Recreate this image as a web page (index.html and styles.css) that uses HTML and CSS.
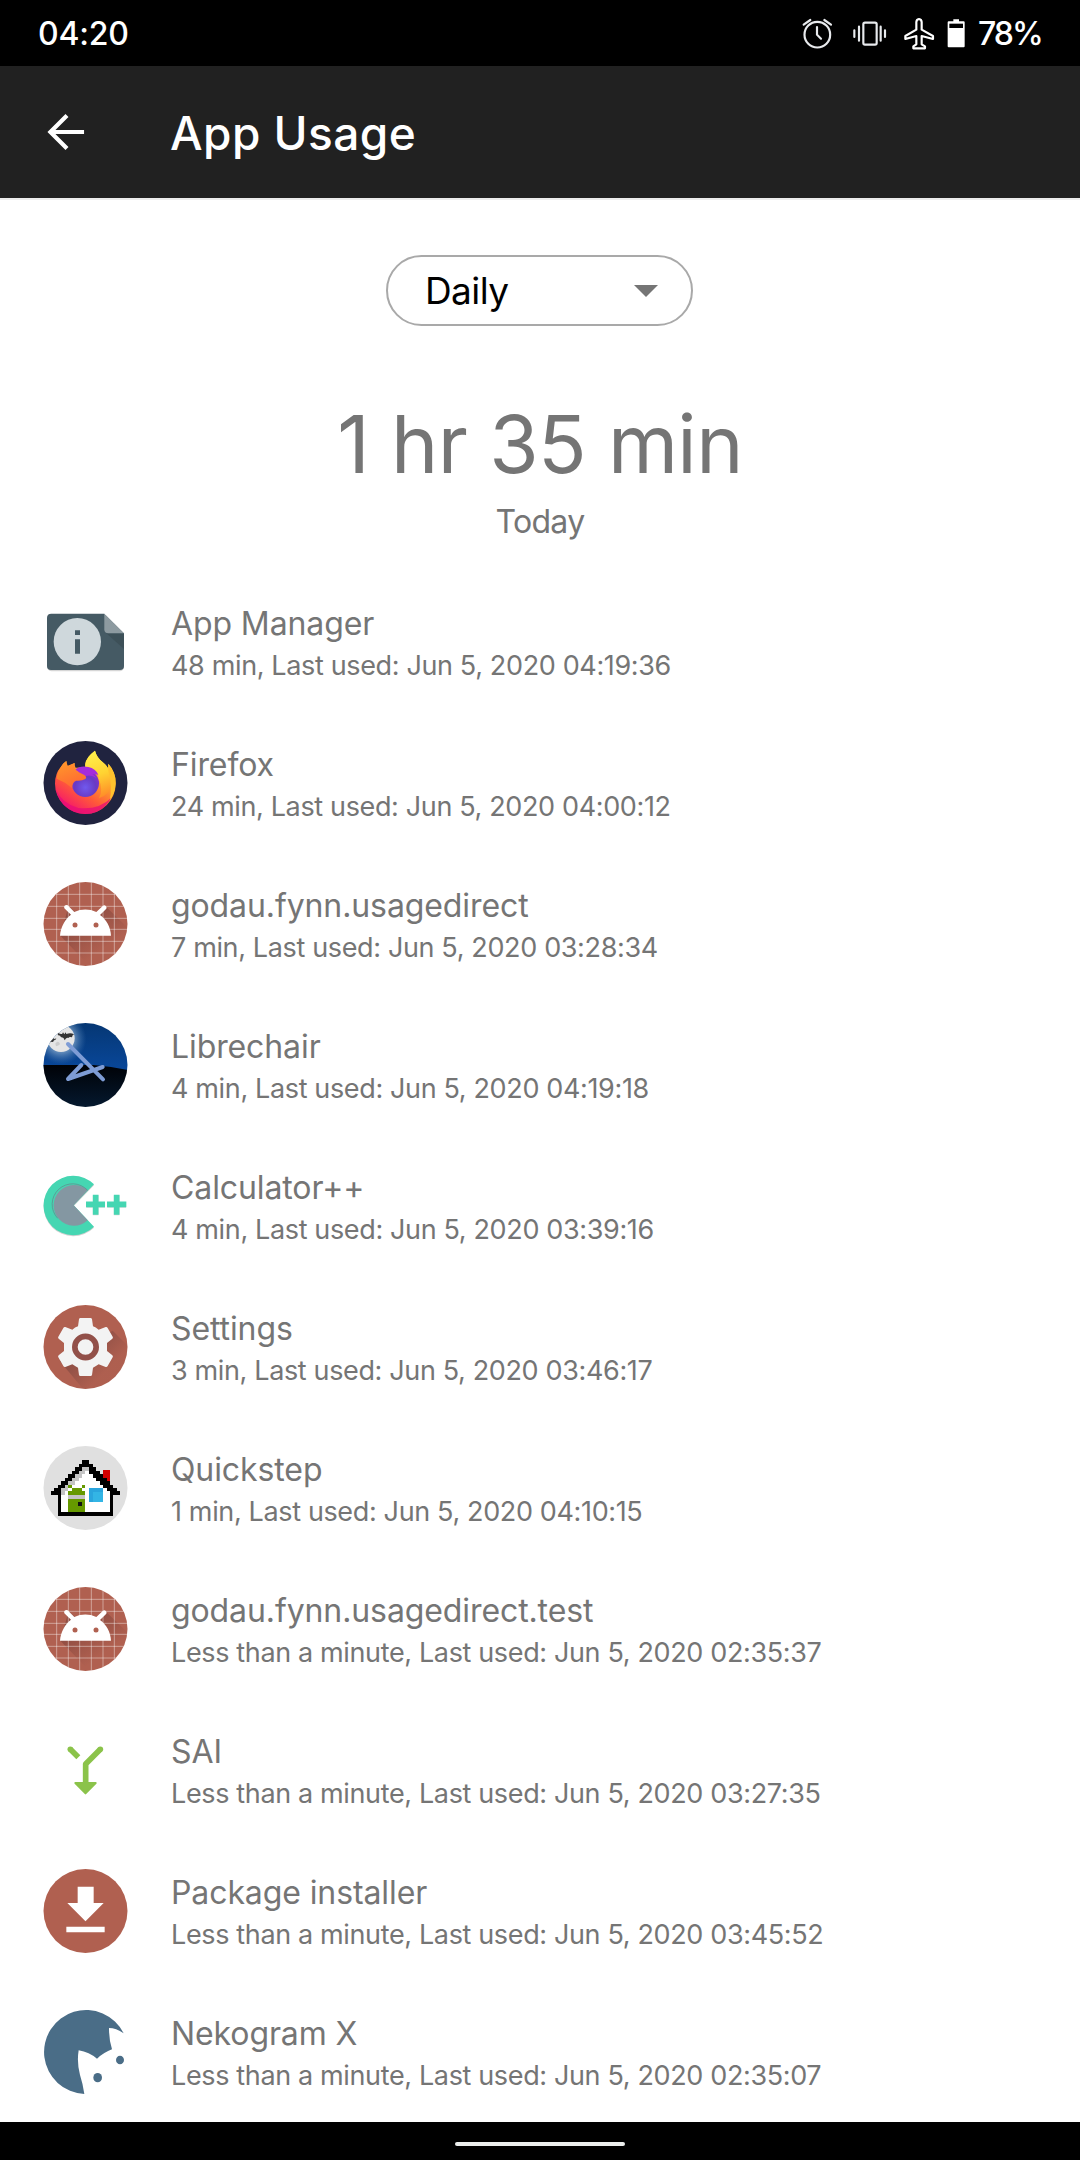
FILE: index.html
```html
<!DOCTYPE html>
<html lang="en">
<head>
<meta charset="utf-8">
<title>App Usage</title>
<link rel="stylesheet" href="styles.css">
</head>
<body>
<svg class="defs" aria-hidden="true">
  <defs>
    <clipPath id="disc"><circle cx="166.500" cy="162" r="126"/></clipPath>
    <linearGradient id="botShade" gradientUnits="userSpaceOnUse" x1="150" y1="150" x2="215" y2="240"><stop offset="0" stop-color="#703a34" stop-opacity=".5"/><stop offset="1" stop-color="#703a34" stop-opacity="0"/></linearGradient>
    <symbol id="android" viewBox="30 27 270 270">
      <g clip-path="url(#disc)">
        <rect x="30" y="27" width="270" height="270" fill="#b06050"/>
        <path d="M91 197L116 108L150 140L205 135L228 110L300 180V300H190Z" fill="url(#botShade)"/>
        <path d="M80 30V300M115 30V300M149 30V300M184 30V300M219 30V300M253 30V300M30 73H300M30 109H300M30 145H300M30 178H300M30 214H300M30 249H300" stroke="#fff" stroke-opacity=".5" stroke-width="2.500"/>
      </g>
      <path d="M90 197C92 171 105 147 123 134L103 115A7 7 0 0 1 113 106L133 126C154 116 178 116 199 126L219 107A7 7 0 0 1 229 116L210 135C229 149 242 171 243 197Z" fill="#fff"/>
      <circle cx="135" cy="165" r="7.500" fill="#b06050"/><circle cx="198" cy="165" r="7.500" fill="#b06050"/>
    </symbol>
  </defs>
</svg>
<div class="screen">
  <div class="status">
    <span class="clock">04:20</span>
    <div class="status-icons">
      <svg class="alarm" viewBox="122 50 96 99" fill="none" stroke="#e8eaed" stroke-width="6.500" stroke-linecap="round"><circle cx="171" cy="103" r="38.500"/><path d="M170 80V103L182 115M130 73L150 59M212 73L192 59"/></svg>
      <svg class="vibrate" viewBox="275 50 105 99" fill="none" stroke="#e8eaed" stroke-width="6.500" stroke-linecap="round"><rect x="309" y="67" width="40" height="66" rx="5"/><path d="M296 79V121M361 79V121M282 90V110M374 90V110"/></svg>
      <svg class="plane" viewBox="427 50 96 99" fill="none" stroke="#fff" stroke-width="6.500" stroke-linejoin="round"><path d="M475 56Q467 57 467 66V88L434 107V116L467 107V132L458 138V144H493V138L483 132V107L517 116V107L483 88V66Q483 57 475 56Z"/></svg>
      <svg class="battery" viewBox="559 50 54 99"><path d="M578 57H595V63H609Q612 63 612 66V138Q612 141 609 141H564Q561 141 561 138V66Q561 63 564 63H578Z" fill="#fff"/><rect x="566" y="70" width="41" height="13" fill="#000"/></svg>
      <span class="percent">78%</span>
    </div>
  </div>
  <header class="toolbar">
    <svg class="back" viewBox="0 0 40 40" fill="none" stroke="#fff" stroke-width="4.300"><path d="M38 20H5M20.500 3L3.500 20L20.500 37"/></svg>
    <h1>App Usage</h1>
  </header>
  <main>
    <div class="period"><span>Daily</span><svg class="caret" viewBox="0 0 24 12"><path d="M0 0H24L12 12Z" fill="#757575"/></svg></div>
    <div class="total">1 hr 35 min</div>
    <div class="day">Today</div>
    <ul class="apps">
      <li>
        <svg class="icon" viewBox="30 21 270 270">
          <rect x="52" y="76" width="230" height="168" rx="13" fill="#000" opacity=".16"/>
          <path d="M64 71H223L282 130V228Q282 240 270 240H63Q51 240 51 228V84Q51 71 64 71Z" fill="#455a64"/>
          <path d="M282 76V130L223 71H277Z" fill="#fff"/>
          <path d="M229 130H282V177Z" fill="#3d5058"/>
          <path d="M223 71L282 130H235Q223 130 223 118Z" fill="#8d9aa0"/>
          <circle cx="142" cy="155" r="71" fill="#cfd8dc"/>
          <path d="M135 121H150V135H135ZM135 148H150V191H135Z" fill="#455a64"/>
        </svg>
        <div class="info"><div class="name">App Manager</div><div class="detail">48 min, Last used: Jun 5, 2020 04:19:36</div></div>
      </li>
      <li>
        <svg class="icon" viewBox="30 24 270 270">
          <defs>
            <linearGradient id="fxBody" x1=".8" y1=".1" x2=".25" y2=".95"><stop offset="0" stop-color="#ffdf3a"/><stop offset=".35" stop-color="#ffa02c"/><stop offset=".65" stop-color="#ff5b38"/><stop offset="1" stop-color="#f5156c"/></linearGradient>
            <linearGradient id="fxTail" x1=".4" y1="0" x2=".6" y2="1"><stop offset="0" stop-color="#fff04c"/><stop offset=".5" stop-color="#ffd332"/><stop offset="1" stop-color="#ff8a28"/></linearGradient>
            <linearGradient id="fxHead" x1="0" y1="0" x2=".4" y2="1"><stop offset="0" stop-color="#ff9b2a"/><stop offset="1" stop-color="#ff6a32"/></linearGradient>
            <radialGradient id="fxGlobe" cx=".5" cy=".65" r=".65"><stop offset="0" stop-color="#7059ee"/><stop offset=".6" stop-color="#683ac3"/><stop offset="1" stop-color="#8c31cf"/></radialGradient>
          </defs>
          <circle cx="166.500" cy="159" r="126" fill="#20233f"/>
          <path d="M92 112Q98 100 109 93Q110 101 113 108L134 99Q133 107 137 113L166 112Q162 86 195 62Q200 83 220 98Q233 107 234 119L235 101Q258 127 257 161A91 91 0 0 1 75 161Q75 131 92 112Z" fill="url(#fxBody)"/>
          <path d="M166 112Q162 86 195 62Q200 83 220 98Q250 125 246 162Q240 194 207 205Q221 177 205 145L205 134Z" fill="url(#fxTail)"/>
          <path d="M235 101Q258 127 257 161Q255 189 239 212Q248 170 235 122Z" fill="#ffc22d"/>
          <circle cx="166" cy="160" r="41" fill="url(#fxGlobe)"/>
          <path d="M136 119Q150 106 175 111Q197 116 205 134L188 132L200 145Q184 132 164 139Z" fill="#a42cdb"/>
          <path d="M92 112Q98 100 109 93Q110 101 113 108L134 99Q132 111 137 121Q148 128 163 135Q172 141 166 147Q155 154 138 152Q126 157 127 175L105 158L80 146Q82 124 92 112Z" fill="url(#fxHead)"/>
          <path d="M77 177Q95 220 145 234Q208 240 243 204Q220 248 172 252Q94 250 77 177Z" fill="#e70c78" opacity=".75"/>
        </svg>
        <div class="info"><div class="name">Firefox</div><div class="detail">24 min, Last used: Jun 5, 2020 04:00:12</div></div>
      </li>
      <li>
        <svg class="icon"><use href="#android"/></svg>
        <div class="info"><div class="name">godau.fynn.usagedirect</div><div class="detail">7 min, Last used: Jun 5, 2020 03:28:34</div></div>
      </li>
      <li>
        <svg class="icon" viewBox="30 30 270 270">
          <defs>
            <clipPath id="night"><circle cx="166.500" cy="165" r="126"/></clipPath>
            <linearGradient id="sky" x1="0" y1="0" x2="0" y2="1"><stop offset="0" stop-color="#053671"/><stop offset="1" stop-color="#09479a"/></linearGradient>
            <linearGradient id="sand" x1="0" y1="0" x2="0" y2="1"><stop offset="0" stop-color="#000207"/><stop offset="1" stop-color="#051a31"/></linearGradient>
            <radialGradient id="glow"><stop offset=".45" stop-color="#9dbbd8" stop-opacity=".75"/><stop offset="1" stop-color="#4b7eb5" stop-opacity="0"/></radialGradient>
          </defs>
          <g clip-path="url(#night)">
            <rect x="30" y="30" width="270" height="150" fill="url(#sky)"/>
            <circle cx="93" cy="87" r="76" fill="url(#glow)"/>
            <circle cx="93" cy="85" r="41" fill="#e5e5e5"/>
            <path d="M76 101Q82 92 88 98T78 109Z" fill="#ccc"/>
            <path d="M82 67Q91 75 97 71L99 67L103 73L107 67L109 72Q122 67 132 73Q126 76 126 82Q118 79 115 84Q109 80 104 91Q101 80 93 82Q91 75 84 76ZM57 89Q68 91 71 84L74 88L79 84Q77 92 72 91Q70 98 65 95L55 99Z" fill="#333"/>
            <path d="M30 165H190Q248 170 300 181V300H30Z" fill="url(#sand)"/>
          </g>
          <path d="M114 102L219 208M154 165L114 207L218 171" fill="none" stroke="#7e9cd5" stroke-width="12" stroke-linecap="round" stroke-linejoin="round"/>
        </svg>
        <div class="info"><div class="name">Librechair</div><div class="detail">4 min, Last used: Jun 5, 2020 04:19:18</div></div>
      </li>
      <li>
        <svg class="icon" viewBox="30 18 270 270">
          <path d="M192 91A89 89 0 1 0 192 218L131 154Z" fill="#000" opacity=".18"/>
          <path d="M192 88A89 89 0 1 0 192 215L131 151Z" fill="#45d6b2"/>
          <path d="M173 106A61 61 0 1 0 173 196L131 151Z" fill="#8497a2"/>
          <path d="M173 106A61 61 0 1 0 83 190" fill="none" stroke="#657984" stroke-width="3" opacity=".6"/>
          <path d="M197 121V181M169 150H225M260 121V181M232 150H288" stroke="#bbb" stroke-width="17" opacity=".6"/>
          <path d="M197 119V179M168 148H225M260 119V179M231 148H289" stroke="#45d6b2" stroke-width="17"/>
        </svg>
        <div class="info"><div class="name">Calculator++</div><div class="detail">4 min, Last used: Jun 5, 2020 03:39:16</div></div>
      </li>
      <li>
        <svg class="icon" viewBox="30 36 270 270">
          <defs>
            <clipPath id="gearDisc"><circle cx="166.500" cy="171" r="126"/></clipPath>
            <linearGradient id="gearShade" gradientUnits="userSpaceOnUse" x1="140" y1="150" x2="230" y2="240"><stop offset="0" stop-color="#75423d" stop-opacity=".75"/><stop offset="1" stop-color="#75423d" stop-opacity=".03"/></linearGradient>
          </defs>
          <circle cx="166.500" cy="171" r="126" fill="#b06050"/>
          <path d="M248 122L310 184V310H170L90 214Z" fill="url(#gearShade)" clip-path="url(#gearDisc)"/>
          <path d="M151 84H182Q185 84 186 88L189 109Q197 112 206 119L227 111Q231 110 233 114L248 140Q250 143 247 146L231 159V183L247 196Q250 199 248 202L233 228Q231 232 227 231L206 223Q198 229 189 233L186 255Q185 258 182 258H151Q148 258 147 255L144 233Q135 229 127 223L106 231Q102 232 100 228L85 202Q83 199 86 196L102 183V159L86 146Q83 143 85 140L100 114Q102 110 106 111L127 119Q135 112 144 109L147 88Q148 84 151 84Z" fill="#f3f3f3"/>
          <circle cx="166.500" cy="171" r="32" fill="none" stroke="#925049" stroke-width="17"/>
        </svg>
        <div class="info"><div class="name">Settings</div><div class="detail">3 min, Last used: Jun 5, 2020 03:46:17</div></div>
      </li>
      <li>
        <svg class="icon" viewBox="30 24 270 270">
          <circle cx="166.500" cy="159" r="126" fill="#e0e0e0"/>
          <g shape-rendering="crispEdges">
            <path d="M219 105H240V138H219Z" fill="#d40000"/>
            <path d="M88 175L167 87L246 175V238H88Z" fill="#fff"/>
            <path d="M94 159H104V149H115V138H125V128H135V117H146V107H156V97H177V107H166V117H156V128H146V138H135V149H115V169H104V180H94Z" fill="#c4c4c4"/>
            <path d="M156 76H177V86H188V97H198V107H209V117H219V128H230V138H240V149H250V159H261V169H271V180H250V243H84V180H63V169H73V159H84V149H94V138H104V128H115V117H125V107H135V97H146V86H156ZM156 97V107H146V117H135V128H125V138H115V149H104V159H94V232H240V169H230V159H219V149H209V138H198V128H188V117H177V107H177V97Z" fill="#000" fill-rule="evenodd"/>
            <path d="M115 149H125V159H156V149H166V159H156V169H166V180H115V169H125V159H115ZM115 191H166V232H115Z" fill="#669900"/>
            <path d="M115 180H166V191H115Z" fill="#c4c4c4"/><path d="M145 201H156V212H145Z" fill="#111"/>
            <path d="M177 159H219V201H177Z" fill="#33b5e5"/><path d="M177 159H219V170H188V201H177Z" fill="#2aa5dd"/>
          </g>
        </svg>
        <div class="info"><div class="name">Quickstep</div><div class="detail">1 min, Last used: Jun 5, 2020 04:10:15</div></div>
      </li>
      <li>
        <svg class="icon"><use href="#android"/></svg>
        <div class="info"><div class="name">godau.fynn.usagedirect.test</div><div class="detail">Less than a minute, Last used: Jun 5, 2020 02:35:37</div></div>
      </li>
      <li>
        <svg class="icon" viewBox="30 15 270 270">
          <path d="M121 88L145 112M211 88L167 132V192" fill="none" stroke="#8bc34a" stroke-width="17" stroke-linejoin="round"/>
          <circle cx="121" cy="88" r="8.500" fill="#8bc34a"/><circle cx="211" cy="88" r="8.500" fill="#8bc34a"/>
          <path d="M136 189H197L166.500 220Z" fill="#8bc34a" stroke="#8bc34a" stroke-width="6" stroke-linejoin="round"/>
        </svg>
        <div class="info"><div class="name">SAI</div><div class="detail">Less than a minute, Last used: Jun 5, 2020 03:27:35</div></div>
      </li>
      <li>
        <svg class="icon" viewBox="30 438 270 270">
          <circle cx="166.500" cy="573" r="126" fill="#b06050"/>
          <path d="M143 500H191V549H221L166.500 604L112 549H143ZM109 620H224V637H109Z" fill="#fff"/>
        </svg>
        <div class="info"><div class="name">Package installer</div><div class="detail">Less than a minute, Last used: Jun 5, 2020 03:45:52</div></div>
      </li>
      <li>
        <svg class="icon" viewBox="30 51 270 270">
          <path d="M163 312A126 126 0 1 1 281 130Q258 114 237 114Q237 151 246 178Q222 187 201 206Q178 187 146 181Q140 217 150 255Q158 279 163 312Z" fill="#4a6d87"/>
          <ellipse cx="270" cy="210" rx="12" ry="13" fill="#4a6d87"/><ellipse cx="203" cy="263" rx="13" ry="14" fill="#4a6d87"/>
        </svg>
        <div class="info"><div class="name">Nekogram X</div><div class="detail">Less than a minute, Last used: Jun 5, 2020 02:35:07</div></div>
      </li>
    </ul>
  </main>
  <nav class="gesture"><div class="handle"></div></nav>
</div>
</body>
</html>
```
FILE: styles.css
```css
* { box-sizing: border-box; }
body { margin: 0; background: #fff; font-family: Inter, "Liberation Sans", sans-serif; }
.defs { position: absolute; width: 0; height: 0; }
.screen { width: 1080px; height: 2160px; display: flex; flex-direction: column; overflow: hidden; }
.status { flex: none; height: 66px; padding: 0 39px 0 38px; display: flex; justify-content: space-between; align-items: center; background: #000; color: #fff; font-weight: 500; font-size: 32px; }
.clock { letter-spacing: -0.200px; }
.status-icons { display: flex; align-items: center; }
.status-icons svg { height: 33px; }
.alarm { width: 32px; margin-right: 19px; }
.vibrate { width: 35px; margin-right: 15.700px; }
.plane { width: 32px; margin-right: 12px; }
.battery { width: 18px; margin-right: 13px; }
.percent { width: 63px; letter-spacing: -2px; white-space: nowrap; }
.toolbar { flex: none; height: 132px; padding-left: 47px; display: flex; align-items: center; background: #212121; color: #fff; }
.back { width: 39px; height: 40px; }
h1 { margin: 1px 0 0 84px; font-size: 46px; font-weight: 500; line-height: 60px; letter-spacing: 0.450px; }
main { flex: 1; display: flex; flex-direction: column; align-items: center; min-height: 0; border-top: 2px solid #ededed; color: #757575; }
.period { flex: none; width: 307px; height: 71px; margin: 55px 1px 0 0; padding: 0 33px 0 37px; display: flex; align-items: center; justify-content: space-between; border: 2px solid #a9a9a9; border-radius: 36px; color: #000; font-size: 37px; letter-spacing: -0.600px; }
.caret { width: 24px; height: 12px; margin-top: 1px; }
.total { margin-top: 68px; font-size: 80px; line-height: 100px; letter-spacing: -0.600px; white-space: nowrap; }
.day { margin-top: 5px; font-size: 32px; line-height: 46px; letter-spacing: -0.700px; }
.apps { align-self: stretch; margin: 26px 0 0; padding: 0; list-style: none; }
.apps li { height: 141px; padding-left: 40px; display: flex; align-items: center; }
.icon { flex: none; width: 90px; height: 90px; margin-right: 41px; }
.info { padding-top: 1px; white-space: nowrap; }
.name { font-size: 32px; line-height: 46px; letter-spacing: -0.100px; }
.detail { font-size: 27px; line-height: 37px; letter-spacing: -0.360px; }
.gesture { flex: none; height: 38px; display: flex; align-items: center; justify-content: center; background: #000; padding-top: 6px; }
.handle { width: 170px; height: 4px; border-radius: 2px; background: #eceeed; }
```
